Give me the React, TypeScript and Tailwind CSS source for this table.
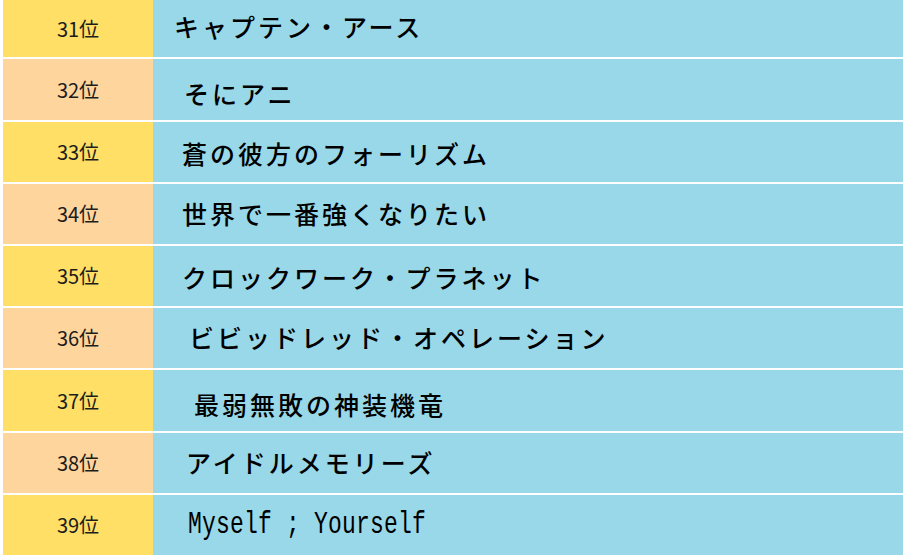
const rows = [
  { rank: "31位", title: "キャプテン・アース", h: "h-[57px]", pad: "pl-[21px]", shift: "pb-[3px]", bg: "bg-[#ffdf66]" },
  { rank: "32位", title: "そにアニ", h: "h-[61px]", pad: "pl-[31px]", shift: "pt-[8px]", bg: "bg-[#ffd59e]" },
  { rank: "33位", title: "蒼の彼方のフォーリズム", h: "h-[60px]", pad: "pl-[29px]", shift: "pt-[4px]", bg: "bg-[#ffdf66]" },
  { rank: "34位", title: "世界で一番強くなりたい", h: "h-[60px]", pad: "pl-[29px]", shift: "", bg: "bg-[#ffd59e]" },
  { rank: "35位", title: "クロックワーク・プラネット", h: "h-[60px]", pad: "pl-[29px]", shift: "pt-[3px]", bg: "bg-[#ffdf66]" },
  { rank: "36位", title: "ビビッドレッド・オペレーション", h: "h-[60px]", pad: "pl-[36px]", shift: "", bg: "bg-[#ffd59e]" },
  { rank: "37位", title: "最弱無敗の神装機竜", h: "h-[61px]", pad: "pl-[41px]", shift: "pt-[9px]", bg: "bg-[#ffdf66]" },
  { rank: "38位", title: "アイドルメモリーズ", h: "h-[60px]", pad: "pl-[33px]", shift: "", bg: "bg-[#ffd59e]" },
  { rank: "39位", title: "Myself ; Yourself", h: "h-[60px]", pad: "pl-[35px]", shift: "", bg: "bg-[#ffdf66]", mono: true },
];

const jp = "font-['Noto_Sans_CJK_JP',sans-serif]";

const Row = ({ row }: any) => (
  <div className={`flex ${row.h}`}>
    <div
      className={`w-[150px] shrink-0 flex items-center justify-center text-[20px] text-[#1c1c1c] ${jp} ${row.bg}`}
    >
      {row.rank}
    </div>
    <div
      className={`flex-1 flex items-center bg-[#99d8e8] text-black ${row.pad} ${row.shift}`}
    >
      {row.mono ? (
        <span className="inline-block scale-y-[1.4] font-['Liberation_Mono',monospace] text-[23px] tracking-[0.2px]">
          {row.title}
        </span>
      ) : (
        <span className={`text-[25px] tracking-[3px] font-medium ${jp}`}>
          {row.title}
        </span>
      )}
    </div>
  </div>
);

export default function App() {
  return (
    <div className="w-[903px] h-[555px] overflow-hidden bg-white pl-[3px] flex flex-col gap-[2px]">
      {rows.map((row, i) => (
        <Row key={i} row={row} />
      ))}
    </div>
  );
}
